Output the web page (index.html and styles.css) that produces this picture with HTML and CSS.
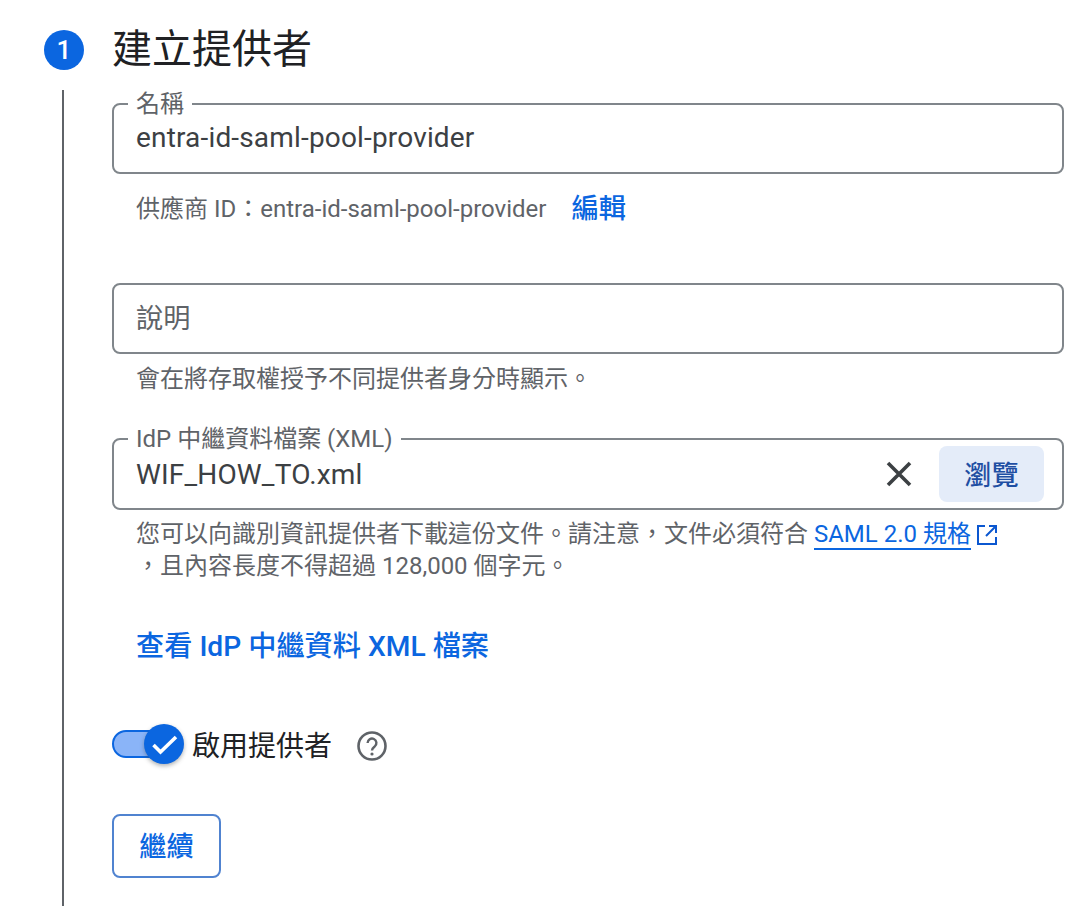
FILE: index.html
```html
<!DOCTYPE html>
<html lang="zh-Hant">
<head>
<meta charset="utf-8">
<title>建立提供者</title>
<link rel="stylesheet" href="styles.css">
</head>
<body>
<main class="step">
  <header class="step-head">
    <span class="step-num">1</span>
    <h1 class="step-title">建立提供者</h1>
  </header>
  <div class="step-body">
    <div class="content">
      <fieldset class="field field-name">
        <legend class="field-label">名稱</legend>
        <div class="field-value">entra-id-saml-pool-provider</div>
      </fieldset>
      <div class="hint hint-id">
        <span>供應商 ID：entra-id-saml-pool-provider</span>
        <a class="edit-link">編輯</a>
      </div>

      <div class="field field-desc">
        <div class="field-placeholder">說明</div>
      </div>
      <p class="hint hint-desc">會在將存取權授予不同提供者身分時顯示。</p>

      <fieldset class="field field-file">
        <legend class="field-label">IdP 中繼資料檔案 (XML)</legend>
        <div class="file-row">
          <div class="field-value">WIF_HOW_TO.xml</div>
          <svg class="clear-icon" viewBox="0 0 28 28" width="28" height="28" aria-hidden="true">
            <path d="M3 3 25 25M25 3 3 25" fill="none" stroke="#3c4043" stroke-width="3.6"/>
          </svg>
          <button class="browse-btn" type="button">瀏覽</button>
        </div>
      </fieldset>
      <p class="hint hint-file">您可以向識別資訊提供者下載這份文件。請注意，文件必須符合 <a class="doc-link">SAML 2.0 規格</a><svg class="ext-icon" viewBox="0 0 20 20" width="20" height="20" aria-hidden="true"><path d="M8 1H1v18h18v-7M12 1h7v7M18.5 1.5 9 11" fill="none" stroke="#0b57d0" stroke-width="2"/></svg><br>，且內容長度不得超過 128,000 個字元。</p>

      <a class="view-link">查看 IdP 中繼資料 XML 檔案</a>

      <div class="toggle-row">
        <span class="toggle">
          <span class="toggle-track"></span>
          <span class="toggle-thumb">
            <svg viewBox="0 0 40 40" width="40" height="40" aria-hidden="true"><path d="M9.5 21 16.5 28 32 13" fill="none" stroke="#fff" stroke-width="3.6"/></svg>
          </span>
        </span>
        <span class="toggle-label">啟用提供者</span>
        <svg class="help-icon" viewBox="0 0 30 30" width="30" height="30" aria-hidden="true">
          <circle cx="15" cy="15" r="13.5" fill="none" stroke="#5f6368" stroke-width="2.6"/>
          <path d="M10.6 12a4.4 4.4 0 1 1 7.2 3.4c-1.5 1.2-2.8 2-2.8 4.1" fill="none" stroke="#5f6368" stroke-width="2.4"/>
          <circle cx="15" cy="23" r="1.6" fill="#5f6368"/>
        </svg>
      </div>

      <button class="continue-btn" type="button">繼續</button>
    </div>
  </div>
</main>
</body>
</html>
```

FILE: styles.css
```css
* { box-sizing: border-box; }

html, body { margin: 0; height: 100%; }

body {
  background: #fff;
  color: #202124;
  font-family: Roboto, "Noto Sans CJK TC", sans-serif;
  overflow: hidden;
}

.step {
  padding: 25px 28px 0 44px;
  height: 906px;
  display: flex;
  flex-direction: column;
}

.step-head {
  display: flex;
  align-items: center;
  gap: 28px;
  height: 50px;
}

.step-num {
  width: 40px;
  height: 40px;
  border-radius: 50%;
  background: #0b66e0;
  color: #fff;
  font-size: 26px;
  font-weight: 500;
  display: flex;
  align-items: center;
  justify-content: center;
  flex: none;
}

.step-title {
  margin: 0;
  font-size: 40px;
  font-weight: 400;
  line-height: 50px;
}

.step-body {
  flex: 1;
  margin: 15px 0 0 18px;
  border-left: 2px solid #5f6368;
  padding-left: 48px;
}

.content {
  display: flex;
  flex-direction: column;
  align-items: flex-start;
}

.field {
  width: 952px;
  margin: 0;
  padding: 0 22px;
  border: 2px solid #80868b;
  border-radius: 8px;
  min-width: 0;
}

.field-label {
  padding: 0 8px;
  margin-left: -8px;
  font-size: 24px;
  line-height: 26px;
  color: #5f6368;
}

.field-value {
  font-size: 28px;
  letter-spacing: .17px;
  line-height: 34px;
  color: #3c4043;
}

.field-name { height: 83px; margin-top: 1px; padding-top: 4px; }

.hint {
  margin: 0;
  padding-left: 24px;
  font-size: 24px;
  line-height: 32px;
  color: #5f6368;
}

.hint-id {
  display: flex;
  align-items: center;
  gap: 25px;
  margin-top: 17px;
  height: 36px;
}

.edit-link {
  color: #0b66e0;
  font-size: 27.2px;
  font-weight: 500;
}

.field-desc {
  height: 71px;
  margin-top: 56px;
  padding-bottom: 6px;
  display: flex;
  align-items: center;
}

.field-placeholder {
  font-size: 27.2px;
  color: #5f6368;
}

.hint-desc { margin-top: 9px; }

.field-file { height: 84px; margin-top: 31px; padding-right: 18px; }

.file-row {
  display: flex;
  align-items: center;
  height: 56px;
  margin-top: -6px;
}

.file-row .field-value { flex: 1; padding-top: 2px; }

.clear-icon { margin-right: 26px; }

.browse-btn {
  width: 105px;
  height: 56px;
  border: 0;
  border-radius: 8px;
  padding: 0 0 2px;
  background: #e4ecf9;
  color: #1f4fa3;
  font: 500 27.2px Roboto, "Noto Sans CJK TC", sans-serif;
}

.hint-file { margin-top: 8px; }

.doc-link {
  color: #0b66e0;
  border-bottom: 2px solid #0b66e0;
}

.ext-icon { vertical-align: -3px; margin-left: 6px; }

.view-link {
  margin: 47px 0 0 24px;
  color: #0b66e0;
  font-size: 28.2px;
  font-weight: 500;
  line-height: 36px;
}

.toggle-row {
  display: flex;
  align-items: center;
  margin-top: 56px;
  height: 46px;
}

.toggle {
  position: relative;
  width: 72px;
  height: 40px;
  display: block;
}

.toggle-track {
  position: absolute;
  left: 0;
  top: 6px;
  width: 56px;
  height: 28px;
  border-radius: 14px;
  background: #8ab4f8;
  border: 2px solid #0b66e0;
}

.toggle-thumb {
  position: absolute;
  left: 32px;
  top: 0;
  width: 40px;
  height: 40px;
  border-radius: 50%;
  background: #0b66e0;
  box-shadow: 0 2px 4px rgba(60, 64, 67, .4);
  display: flex;
  align-items: center;
  justify-content: center;
}

.toggle-label {
  margin-left: 8px;
  font-size: 28px;
  color: #202124;
}

.help-icon { margin: 4px 0 0 25px; }

.continue-btn {
  margin-top: 47px;
  width: 109px;
  height: 64px;
  padding: 0 0 4px;
  background: #fff;
  border: 2px solid #5083d0;
  border-radius: 8px;
  color: #0b66e0;
  font: 500 27.2px Roboto, "Noto Sans CJK TC", sans-serif;
}
```
